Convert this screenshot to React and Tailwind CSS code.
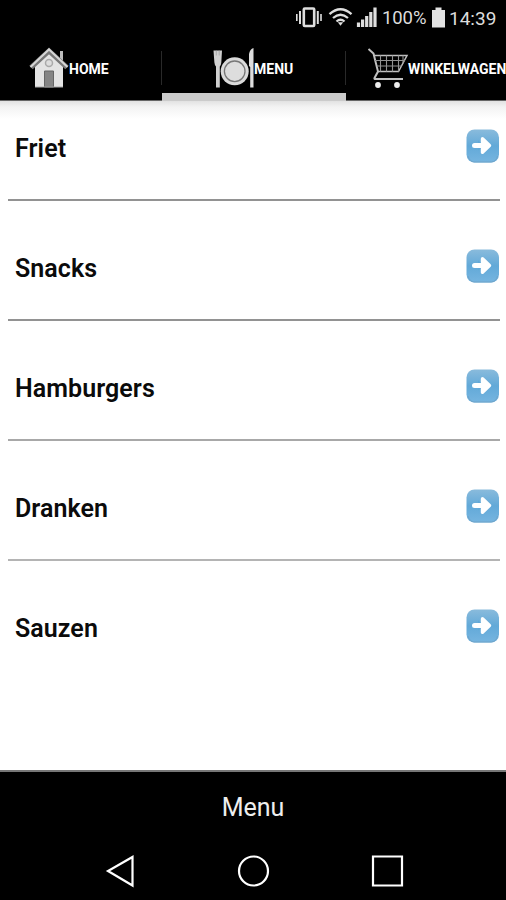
import React from "react";

const items = [
  { name: "Friet", line: "border-[#929292]" },
  { name: "Snacks", line: "border-[#929292]" },
  { name: "Hamburgers", line: "border-[#a8a8a8]" },
  { name: "Dranken", line: "border-[#b4b4b4]" },
  { name: "Sauzen", line: "border-transparent" },
];

function StatusBar() {
  return (
    <div className="flex h-9 items-center text-[#dcdcdc]">
      <svg className="ml-[295px] h-9 w-[85px] shrink-0" viewBox="295 0 85 36" fill="none" stroke="#dedede">
        <rect x="303.8" y="8.5" width="10.4" height="17.5" rx="1" strokeWidth="2.6" />
        <path d="M300 11v13M317.8 11v13" strokeWidth="2" />
        <path d="M296.8 14v7M321 14v7" strokeWidth="1.6" />
        <path d="M329.5 14.2q11-10 22 0M333 18q7.500-6.500 15 0M336.500 21.500q4-3.500 8 0" strokeWidth="2.3" />
        <path d="M337.800 22.300h5.400l-2.700 3.500z" fill="#dedede" stroke="none" />
        <path d="M358.500 22.500v4.500M362.600 19.500v7.500M366.700 16v11M370.800 12v15M375 7.500v19.500" strokeWidth="3.200" />
      </svg>
      <span className="ml-[2px] w-[49px] whitespace-nowrap text-[18.500px] leading-9 tracking-[-0.1px]">100%</span>
      <svg className="h-9 w-[18px] shrink-0" viewBox="431 0 18 36" fill="#e2e2e2">
        <path d="M435.500 7.500h6v2.500h3.500v17.500h-13V10h3.500z" />
      </svg>
      <span className="mt-px whitespace-nowrap text-[19px] leading-9">14:39</span>
    </div>
  );
}

function HomeIcon() {
  return (
    <svg className="h-[42px] w-[40px] shrink-0" viewBox="29 47 40 42">
      <path d="M60 51h3v11h-3z" fill="#bdbdbd" />
      <path d="M35 65L49 51l14 14v22H35z" fill="#e4e4e4" />
      <path d="M31 67.500L49 51l18 16.500" fill="none" stroke="#777" strokeWidth="5" />
      <path d="M30.500 67L49 49.500l18.500 17.500" fill="none" stroke="#d6d6d6" strokeWidth="2" />
      <circle cx="49" cy="63" r="3.500" fill="#dedede" stroke="#aaa" strokeWidth="1.500" />
      <path d="M44.500 71h9v16h-9z" fill="#858585" stroke="#666" />
      <path d="M35 87h28" stroke="#aaa" />
    </svg>
  );
}

function PlateIcon() {
  return (
    <svg className="h-[42px] w-[42px] shrink-0" viewBox="212 47 42 42">
      <path d="M213.500 50.500h8.500l-.7 12q-.3 3-1.500 4v21h-3.800v-21q-1.300-1-1.600-4z" fill="#d0d0d0" />
      <path d="M216.300 50.500v5M219.200 50.500v5" stroke="#999" strokeWidth=".7" />
      <path d="M253.500 48v39.500h-3.300V67l-1.200-1V54q1-5 4.500-6z" fill="#ddd" />
      <circle cx="234.700" cy="71.300" r="14" fill="#dadada" />
      <circle cx="234.700" cy="71.300" r="10.300" fill="#ddd" stroke="#777" strokeWidth="1.300" />
    </svg>
  );
}

function CartIcon() {
  return (
    <svg className="h-[42px] w-[42px] shrink-0" viewBox="367 47 42 42" fill="none" stroke="#c0c0c0">
      <path d="M368.500 49l5 4.500L378 71.500l-3.500 6.500q-.5 1 1 1h27.500" strokeWidth="2" />
      <path d="M374 55.500h33l-8.500 16H378" strokeWidth="1.500" />
      <path d="M375 60.500h30M377 66h25M380.500 55.500v16M386.500 55.500v16M392.500 55.500v16M398.500 55.500v16M403 55.500v8" stroke="#929292" strokeWidth="1.100" />
      <circle cx="378" cy="85" r="2.900" fill="#eee" stroke="none" />
      <circle cx="397" cy="85" r="2.900" fill="#eee" stroke="none" />
    </svg>
  );
}

function Tabs() {
  return (
    <nav className="flex h-[65px] w-[560px] text-[14px] font-bold text-white">
      <div className="flex w-[162px] border-b border-[#666] pt-[11px] pl-[29px]">
        <HomeIcon />
        <span className="leading-[44px]">HOME</span>
      </div>
      <div className="flex w-[184px] flex-col">
        <div className="flex h-[57px] pt-[11px]">
          <i className="mt-1 -ml-px h-[34px] w-px bg-[#292929]" />
          <div className="ml-[50px] flex">
            <PlateIcon />
            <span className="leading-[44px]">MENU</span>
          </div>
        </div>
        <div className="h-2 bg-[#cbcbcb]" />
      </div>
      <div className="flex grow border-b border-[#666] pt-[11px]">
        <i className="mt-1 -ml-px mr-[21px] h-[34px] w-px bg-[#292929]" />
        <CartIcon />
        <span className="-ml-px leading-[44px]">WINKELWAGEN</span>
      </div>
    </nav>
  );
}

function ArrowButton() {
  return (
    <svg className="mb-px h-[34px] w-[34px]" viewBox="0 0 34 34" fill="none">
      <defs>
        <linearGradient id="blue" x1="0" y1="0" x2="0" y2="1">
          <stop stopColor="#8abbdc" />
          <stop offset=".5" stopColor="#62a9d8" />
          <stop offset="1" stopColor="#76b5e0" />
        </linearGradient>
      </defs>
      <rect x="0.500" y="0.500" width="32.500" height="33" rx="8" fill="url(#blue)" />
      <path d="M2 27q1.500 5.500 6 6h17.500q5-.5 6-6" stroke="#6fa3c8" strokeWidth="1" />
      <path d="M8.500 16.500H20" stroke="white" strokeWidth="5" strokeLinecap="round" />
      <path d="M16.500 9.800l7 6.700-7 6.700z" fill="white" stroke="white" strokeWidth="3.400" strokeLinejoin="round" />
      <path d="M12 11.500l3 2.500h-3zM12 21.500l3-2.500h-3z" fill="#62a9d8" />
    </svg>
  );
}

export default function App() {
  return (
    <div className="flex h-[900px] w-[506px] flex-col overflow-hidden bg-white font-[Roboto,sans-serif]">
      <header className="bg-black">
        <StatusBar />
        <Tabs />
      </header>
      <main className="grow bg-[linear-gradient(#e2e2e2,#f3f3f3_6px,#ffffff_18px)] pr-[6px] pl-2">
        {items.map((item, i) => (
          <div
            key={item.name}
            className={`flex items-end justify-between border-b-2 pb-[35px] pl-[7px] ${item.line} ${i === 0 ? "h-[100px]" : "h-[120px]"}`}
          >
            <span className="text-[25px] leading-[30px] font-semibold tracking-[0.07px] text-[#0b0b0b]">{item.name}</span>
            <ArrowButton />
          </div>
        ))}
      </main>
      <footer className="h-[130px] border-t-2 border-[#777] bg-black text-white">
        <div className="h-[70px] text-center text-[25px] leading-[71px] text-[#eeeeee]">Menu</div>
        <svg className="h-[58px] w-full" viewBox="0 842 506 58" fill="none" stroke="white" strokeWidth="2.200">
          <path d="M132.500 857v28.500L108 871z" />
          <circle cx="253.500" cy="871" r="14.500" />
          <path d="M373 856.500h29v29h-29z" />
        </svg>
      </footer>
    </div>
  );
}
